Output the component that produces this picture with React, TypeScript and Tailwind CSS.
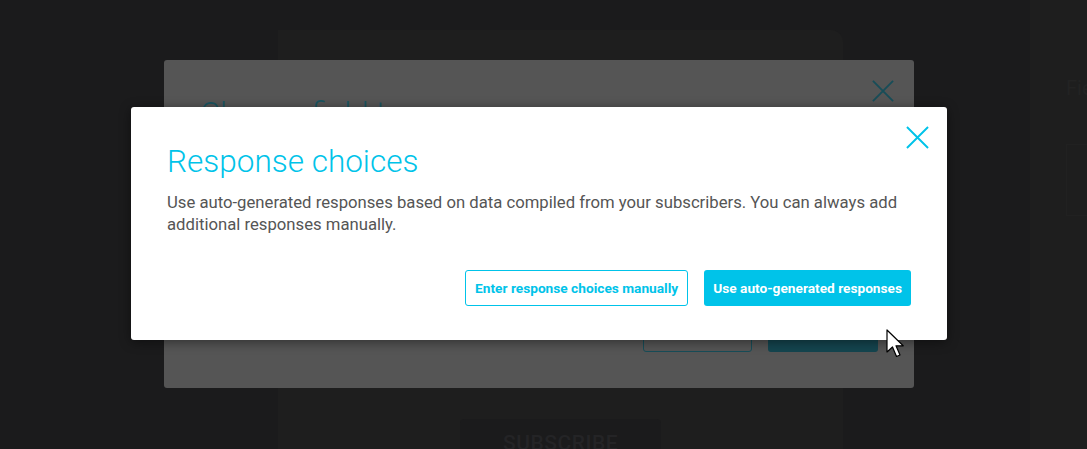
function Cross({ className }: { className?: string }) {
  return (
    <svg viewBox="0 0 24 24" className={className} fill="none" stroke="currentColor" strokeWidth="2">
      <path d="M1 1 L23 23 M23 1 L1 23" />
    </svg>
  );
}

function Cursor() {
  return (
    <svg width="20" height="30" viewBox="0 0 20 30" className="absolute left-[886px] top-[329px]">
      <path
        d="M1 1 L1 23 L6.5 18 L10.5 27.5 L14 26 L10 16.8 L17.2 16.8 Z"
        fill="#ffffff"
        stroke="#000000"
        strokeWidth="1.2"
        strokeLinejoin="round"
      />
    </svg>
  );
}

export default function App() {
  return (
    <div className="relative h-[449px] w-full overflow-hidden bg-[#1b1b1c] font-['Roboto',sans-serif]">
      {/* page behind the overlays */}
      <div className="flex h-full">
        <div className="w-[278px] shrink-0" />
        <div className="mt-[30px] flex w-[565px] shrink-0 flex-col items-center rounded-tr-[12px] bg-[#1e1e1e]">
          <div className="mt-auto -mb-[10px] flex h-[40px] w-[201px] items-start justify-center rounded-[4px] bg-[#1b1b1c] pt-[14px]">
            <span className="text-[21px] font-medium tracking-wide leading-none text-[#242426]">SUBSCRIBE</span>
          </div>
        </div>
        <div className="w-[187px] shrink-0" />
        <div className="flex flex-1 flex-col bg-[#1e1e1e] pl-[36px] pt-[78px]">
          <span className="text-[20px] leading-none text-[#232323]">Field</span>
          <div className="mt-[46px] h-[72px] w-[40px] border border-[#212121]" />
        </div>
      </div>

      {/* background modal */}
      <div className="absolute left-[164px] top-[60px] flex h-[328px] w-[750px] flex-col rounded-[3px] bg-[#555555] px-9 pb-[36px] pt-[36px]">
        <div className="flex items-start justify-between">
          <h2 className="text-[31px] font-light leading-[36px] text-[#1a5460]">Change field type</h2>
          <Cross className="-mr-[16px] -mt-[16px] h-[22px] w-[22px] text-[#174d58]" />
        </div>
        <div className="mt-auto flex justify-end gap-4">
          <div className="h-[32px] w-[109px] rounded-[3px] border border-[#174d58]" />
          <div className="h-[32px] w-[110px] rounded-[3px] bg-[#14454f]" />
        </div>
      </div>

      {/* active modal */}
      <div className="absolute left-[131px] top-[107px] flex h-[233px] w-[816px] flex-col rounded-[3px] bg-white px-9 pb-[34px] pt-[37px] shadow-[0_2px_12px_rgba(0,0,0,0.45)]">
        <button className="absolute left-[775px] top-[19px] text-[#00c3e9]">
          <Cross className="h-[23px] w-[23px]" />
        </button>
        <h1 className="text-[31.5px] font-light leading-[36px] text-[#00c3e9]">Response choices</h1>
        <p className="mt-[12px] text-[16.7px] leading-[22px] text-[#555555]">
          Use auto-generated responses based on data compiled from your subscribers. You can always add additional responses manually.
        </p>
        <div className="mt-auto flex justify-end gap-4">
          <button className="h-[36px] rounded-[3px] border border-[#00c3e9] px-[9px] text-[13.7px] font-bold text-[#00c3e9]">
            Enter response choices manually
          </button>
          <button className="h-[36px] rounded-[3px] bg-[#00c3e9] px-[9px] text-[13.7px] font-bold text-white">
            Use auto-generated responses
          </button>
        </div>
      </div>

      <Cursor />
    </div>
  );
}
